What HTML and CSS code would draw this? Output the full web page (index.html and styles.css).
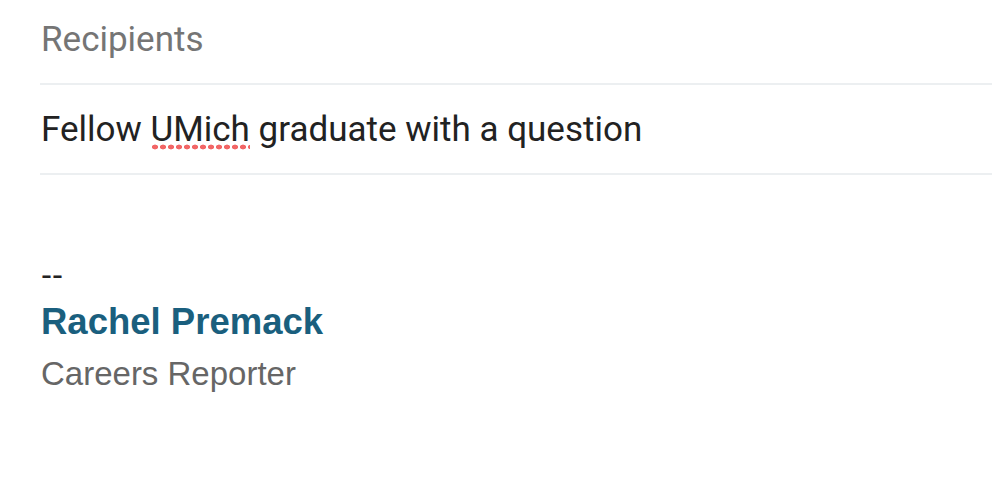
FILE: index.html
```html
<!DOCTYPE html>
<html>
<head>
<meta charset="utf-8">
<link rel="stylesheet" href="styles.css">
</head>
<body>
<div class="compose">
  <div class="field recipients">Recipients</div>
  <div class="field subject">Fellow <span class="misspelled">UMich</span> graduate with a question</div>
  <div class="body">
    <div class="sig-dash">--</div>
    <div class="sig-name">Rachel Premack</div>
    <div class="sig-title">Careers Reporter</div>
  </div>
</div>
</body>
</html>
```
FILE: styles.css
```css
html, body {
  margin: 0;
  padding: 0;
  background: #ffffff;
}
.compose {
  padding-left: 40px;
  width: 952px;
}
.field {
  font-family: Roboto, "Liberation Sans", sans-serif;
  font-size: 35px;
  line-height: 40px;
  border-bottom: 2px solid #eceff1;
  padding-left: 1px;
}
.recipients {
  color: #757575;
  padding-top: 20px;
  padding-bottom: 23px;
}
.subject {
  color: #222222;
  padding-top: 25px;
  padding-bottom: 23px;
}
.misspelled {
  position: relative;
}
.misspelled::after {
  content: "";
  position: absolute;
  left: 0;
  right: 0;
  bottom: 0;
  height: 6px;
  background-image: radial-gradient(ellipse 3.4px 2.7px at 50% 50%, #f26666 80%, rgba(242,102,102,0) 100%);
  background-size: 8px 6px;
  background-repeat: repeat-x;
}
.body {
  font-family: "Liberation Sans", Arial, sans-serif;
  padding-top: 77px;
  padding-left: 1px;
}
.sig-dash {
  font-size: 33px;
  line-height: 46px;
  color: #222222;
}
.sig-name {
  font-size: 36.5px;
  line-height: 48px;
  font-weight: bold;
  color: #1a5f7e;
}
.sig-title {
  font-size: 33px;
  line-height: 55px;
  color: #666666;
}
```
